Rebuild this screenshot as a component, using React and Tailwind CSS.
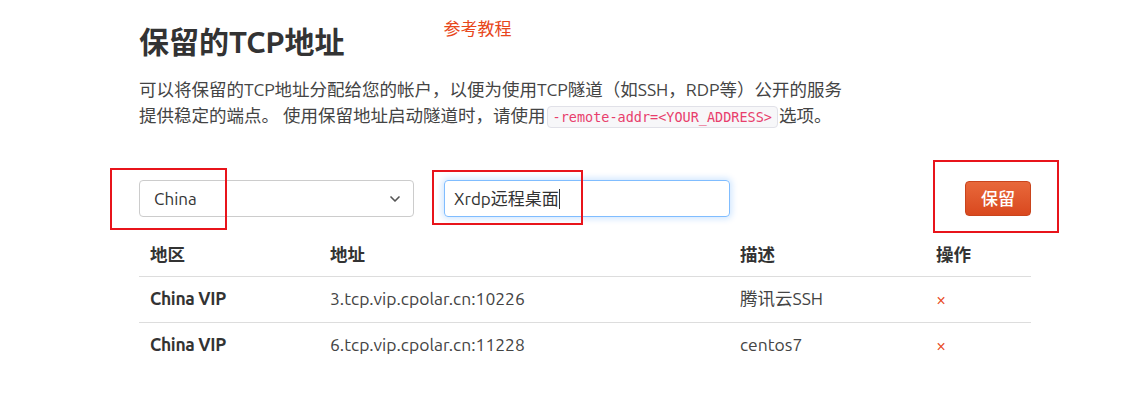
import { ChevronDown } from 'lucide-react';

const font = "font-['Ubuntu','Open_Sans','Noto_Sans_CJK_SC',sans-serif]";

const rows = [
  { region: 'China VIP', addr: '3.tcp.vip.cpolar.cn:10226', desc: '腾讯云SSH' },
  { region: 'China VIP', addr: '6.tcp.vip.cpolar.cn:11228', desc: 'centos7' },
];

export default function App() {
  return (
    <div className={`relative w-[1125px] h-[419px] bg-white text-[#333] ${font}`}>
      <div className="w-[892px] ml-[139px] pt-[20px]">
        <div className="flex items-start">
          <h1 className="text-[30px] leading-[44px] font-bold text-[#333]">保留的TCP地址</h1>
          <a className="ml-[99px] text-[17px] leading-[18px] text-[#e8471b]">参考教程</a>
        </div>

        <p className="mt-[13px] text-[17.5px] leading-[26px] text-[#444] w-[712px]">
          可以将保留的TCP地址分配给您的帐户，以便为使用TCP隧道（如SSH，RDP等）公开的服务提供稳定的端点。 使用保留地址启动隧道时，请使用
          <code className="mx-[1px] px-[5px] py-0 text-[13.5px] leading-[20px] inline-block font-['DejaVu_Sans_Mono',monospace] text-[#e83e6c] bg-[#f7f7f9] border border-[#e1e1e8] rounded-[4px]">
            -remote-addr=&lt;YOUR_ADDRESS&gt;
          </code>
          选项。
        </p>

        <div className="mt-[51px] flex items-center">
          <div className="w-[275px] h-[37px] border border-[#ccc] rounded-[4px] flex items-center justify-between pl-[14px] pr-[10px] text-[17px]">
            <span>China</span>
            <ChevronDown size={16} strokeWidth={2.5} className="text-[#555]" />
          </div>
          <div className="ml-[30px] w-[286px] h-[37px] border border-[#80bdff] rounded-[4px] shadow-[0_0_6px_2px_rgba(0,123,255,0.18)] flex items-center pl-[9px] text-[17px]">
            <span>Xrdp远程桌面</span>
            <span className="w-px h-[20px] bg-[#333]" />
          </div>
          <button className="ml-auto w-[66px] h-[35px] rounded-[4px] bg-gradient-to-b from-[#e8683a] to-[#d9481e] border border-[#c9441c] text-white text-[17px] font-medium">
            保留
          </button>
        </div>

        <table className="mt-[17px] w-full text-[17.5px] border-collapse">
          <thead>
            <tr className="h-[42px] border-b border-[#ddd]">
              <th className="text-left font-bold pl-[11px] w-[180px]">地区</th>
              <th className="text-left font-bold pl-[11px] w-[410px]">地址</th>
              <th className="text-left font-bold pl-[11px] w-[198px]">描述</th>
              <th className="text-left font-bold pl-[9px]">操作</th>
            </tr>
          </thead>
          <tbody>
            {rows.map((r, i) => (
              <tr key={i} className={`h-[46px] ${i === 0 ? 'border-b border-[#ddd]' : ''}`}>
                <td className="pl-[11px] font-bold tracking-[-0.3px]">{r.region}</td>
                <td className="pl-[11px] text-[#444]">{r.addr}</td>
                <td className="pl-[11px] text-[#444]">{r.desc}</td>
                <td className="pl-[9px] text-[#e8471b] text-[18px]">×</td>
              </tr>
            ))}
          </tbody>
        </table>
      </div>

      <div className="absolute left-[110px] top-[168px] w-[117px] h-[62px] border-2 border-[#e8141b]" />
      <div className="absolute left-[432px] top-[170px] w-[151px] h-[55px] border-2 border-[#e8141b]" />
      <div className="absolute left-[933px] top-[160px] w-[126px] h-[73px] border-2 border-[#e8141b]" />
    </div>
  );
}
